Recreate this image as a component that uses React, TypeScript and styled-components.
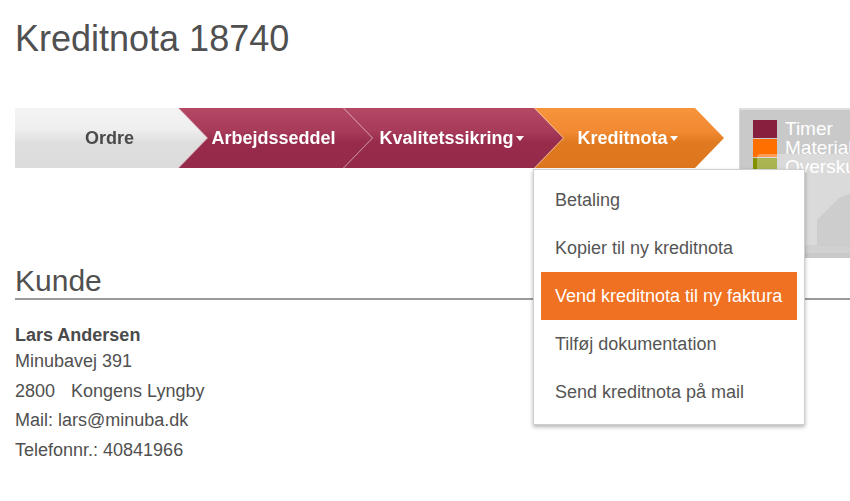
import React from 'react';
import styled, { createGlobalStyle, css } from 'styled-components';

const GlobalStyle = createGlobalStyle`
  html, body {
    margin: 0;
    padding: 0;
    overflow: hidden;
    background: #fff;
  }
  body {
    font-family: "Liberation Sans", Arial, sans-serif;
    color: #505050;
  }
`;

type Tone = 'gray' | 'crimson' | 'orange';

const tones = {
  gray: css`
    background: linear-gradient(#f4f4f4 0%, #efefef 35%, #dedede 58%, #dcdcdc 100%);
    color: #4a4a4a;
  `,
  crimson: css`
    background: linear-gradient(#b34865 0%, #a73b59 38%, #982b4b 58%, #952a4a 100%);
    color: #fff;
  `,
  orange: css`
    background: linear-gradient(#f6943c 0%, #f18a32 38%, #e07a20 58%, #dd761e 100%);
    color: #fff;
  `,
};

const Page = styled.div`
  padding-left: 15px;
  width: 835px;
`;

const Title = styled.h1`
  margin: 19px 0 0;
  font-size: 36px;
  line-height: 40px;
  font-weight: normal;
  color: #505050;
`;

const TopRow = styled.div`
  display: flex;
  align-items: flex-start;
  gap: 15px;
  margin-top: 49px;
`;

const Crumbs = styled.div`
  position: relative;
  display: flex;
  height: 60px;
  flex-shrink: 0;
`;

const CrumbWrap = styled.div<{ $w: number; $z: number; $first?: boolean }>`
  position: relative;
  z-index: ${(p) => p.$z};
  width: ${(p) => p.$w}px;
  margin-left: ${(p) => (p.$first ? 0 : -29)}px;
  filter: drop-shadow(1px 0 0 rgba(255, 255, 255, 0.55));
`;

const CrumbFace = styled.div<{ $tone: Tone }>`
  height: 100%;
  display: flex;
  align-items: center;
  justify-content: center;
  padding-right: 3px;
  box-sizing: border-box;
  font-size: 18px;
  font-weight: bold;
  clip-path: polygon(0 0, calc(100% - 29px) 0, 100% 50%, calc(100% - 29px) 100%, 0 100%);
  ${(p) => tones[p.$tone]}
`;

const Caret = styled.span`
  display: inline-block;
  margin-left: 2px;
  margin-top: 1px;
  width: 0;
  height: 0;
  border-left: 4.5px solid transparent;
  border-right: 4.5px solid transparent;
  border-top: 5px solid #fff;
`;

const Menu = styled.ul`
  position: absolute;
  z-index: 20;
  left: 518px;
  top: 61px;
  width: 256px;
  margin: 0;
  padding: 6px 7px 8px;
  list-style: none;
  background: #fff;
  border: 1px solid #cfcfcf;
  box-shadow: 0 2px 4px rgba(0, 0, 0, 0.3);
`;

const MenuItem = styled.li<{ $active?: boolean }>`
  height: 48px;
  display: flex;
  align-items: center;
  padding-left: 14px;
  font-size: 18px;
  white-space: nowrap;
  color: ${(p) => (p.$active ? '#fff' : '#555')};
  background: ${(p) => (p.$active ? '#f07122' : 'transparent')};
`;

const ChartPanel = styled.div`
  position: relative;
  flex-shrink: 0;
  width: 160px;
  height: 150px;
  box-sizing: border-box;
  background: #c9c9c9;
  border-top: 2px solid #dedede;
  border-left: 1px solid #d6d6d6;
  padding: 9px 0 0 13px;
`;

const LegendRow = styled.div`
  display: flex;
  align-items: center;
  gap: 8px;
  height: 19px;
  font-size: 19px;
  color: #fff;
  white-space: nowrap;
`;

const Swatch = styled.span<{ $color: string }>`
  width: 24px;
  height: 18px;
  flex-shrink: 0;
  background: ${(p) => p.$color};
`;

const ChartArea = styled.svg`
  position: absolute;
  left: 17px;
  top: 44px;
`;

const Section = styled.h2`
  margin: 6px 0 0;
  font-size: 30px;
  line-height: 34px;
  font-weight: normal;
  color: #505050;
  border-bottom: 2px solid #9a9a9a;
`;

const Customer = styled.div`
  margin-top: 23px;
  font-size: 18px;
`;

const Name = styled.div`
  font-weight: bold;
  line-height: 24px;
  color: #4a4a4a;
`;

const Line = styled.div`
  line-height: 29.5px;
`;

const Zip = styled.span`
  margin-right: 16px;
`;

const crumbs: { label: string; tone: Tone; w: number; caret?: boolean }[] = [
  { label: 'Ordre', tone: 'gray', w: 192 },
  { label: 'Arbejdsseddel', tone: 'crimson', w: 194 },
  { label: 'Kvalitetssikring', tone: 'crimson', w: 220, caret: true },
  { label: 'Kreditnota', tone: 'orange', w: 190, caret: true },
];

const menuItems = [
  'Betaling',
  'Kopier til ny kreditnota',
  'Vend kreditnota til ny faktura',
  'Tilføj dokumentation',
  'Send kreditnota på mail',
];

const legend = [
  { label: 'Timer', color: '#87203f' },
  { label: 'Materialer', color: '#ff6f00' },
  { label: 'Overskud', color: '#829200' },
];

const App = () => {
  return (
    <>
      <GlobalStyle />
      <Page>
        <Title>Kreditnota 18740</Title>

        <TopRow>
          <Crumbs>
            {crumbs.map((c, i) => (
              <CrumbWrap key={c.label} $w={c.w} $z={10 - i} $first={i === 0}>
                <CrumbFace $tone={c.tone}>
                  {c.label}
                  {c.caret && <Caret />}
                </CrumbFace>
              </CrumbWrap>
            ))}
            <Menu>
              {menuItems.map((m, i) => (
                <MenuItem key={m} $active={i === 2}>
                  {m}
                </MenuItem>
              ))}
            </Menu>
          </Crumbs>

          <ChartPanel>
            {legend.map((l) => (
              <LegendRow key={l.label}>
                <Swatch $color={l.color} />
                {l.label}
              </LegendRow>
            ))}
            <ChartArea width="140" height="100" viewBox="0 0 140 100">
              <rect x="0" y="0" width="140" height="99" rx="4" fill="#fff" opacity="0.32" />
              <path d="M60 66 L82 44 L140 20 L140 92 L60 92 Z" fill="#c4c4c4" opacity="0.6" />
              <rect x="0" y="91" width="140" height="8" fill="#c8c8c8" opacity="0.5" />
            </ChartArea>
          </ChartPanel>
        </TopRow>

        <Section>Kunde</Section>

        <Customer>
          <Name>Lars Andersen</Name>
          <Line>Minubavej 391</Line>
          <Line>
            <Zip>2800</Zip>Kongens Lyngby
          </Line>
          <Line>Mail: lars@minuba.dk</Line>
          <Line>Telefonnr.: 40841966</Line>
        </Customer>
      </Page>
    </>
  );
};

export default App;
